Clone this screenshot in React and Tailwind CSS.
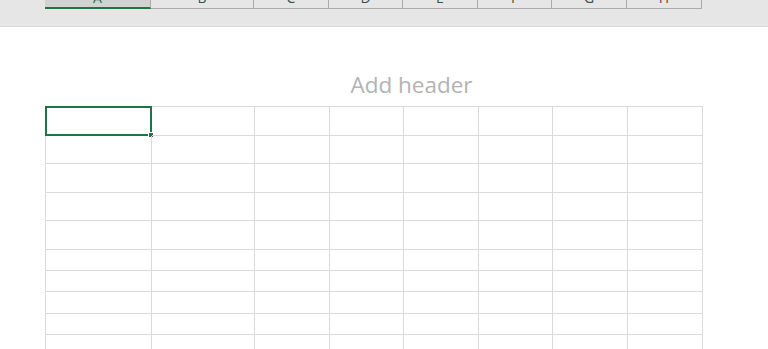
import React from 'react'

const cols = [
  { label: 'A', w: 'w-[106px]' },
  { label: 'B', w: 'w-[103px]' },
  { label: 'C', w: 'w-[75px]' },
  { label: 'D', w: 'w-[74px]' },
  { label: 'E', w: 'w-[75px]' },
  { label: 'F', w: 'w-[74px]' },
  { label: 'G', w: 'w-[75px]' },
  { label: 'H', w: 'w-[75px]' },
]

const rows = ['h-[29px]', 'h-[28px]', 'h-[29px]', 'h-[28px]', 'h-[29px]', 'h-[21px]', 'h-[21px]', 'h-[22px]', 'h-[21px]', 'h-[21px]', 'h-[21px]']

const App = () => {
  return (
    <div className="w-[768px] h-[349px] overflow-hidden bg-white font-['Open_Sans',sans-serif]">
      <div className="h-[27px] bg-[#e6e6e6] border-b border-[#d9d9d9] overflow-hidden">
        <div className="flex pl-[45px] -mt-[13px]">
          {cols.map((c, i) => (
            <div
              key={c.label}
              className={
                i === 0
                  ? `${c.w} h-[22px] bg-[#d2d2d2] border-b-2 border-[#217346] border-r border-r-[#ababab] flex items-center justify-center text-[14px] text-[#217346]`
                  : `${c.w} h-[22px] border-b border-r border-[#ababab] flex items-center justify-center text-[14px] text-[#3f4f44]`
              }
            >
              {c.label}
            </div>
          ))}
        </div>
      </div>

      {/* header placeholder */}
      <div className="h-[79px] pl-[45px] flex">
        <div className="w-[657px] flex items-center justify-center pt-[36px] pl-[76px]">
          <span className="text-[22.5px] text-[#b3b3b3]">Add header</span>
        </div>
      </div>

      {/* cells */}
      <div className="ml-[45px] w-[658px] border-l border-t border-[#dadada]">
        {rows.map((h, r) => (
          <div key={r} className={`flex ${h}`}>
            {cols.map((c, i) => (
              <div key={c.label} className={`${c.w} h-full border-r border-b border-[#dadada] relative`}>
                {r === 0 && i === 0 && (
                  <div className="absolute -left-px -top-px w-[107px] h-[30px] border-2 border-[#217346]">
                    <div className="absolute -right-[4px] -bottom-[4px] w-[6px] h-[6px] bg-[#217346] border border-white" />
                  </div>
                )}
              </div>
            ))}
          </div>
        ))}
      </div>
    </div>
  )
}

export default App
